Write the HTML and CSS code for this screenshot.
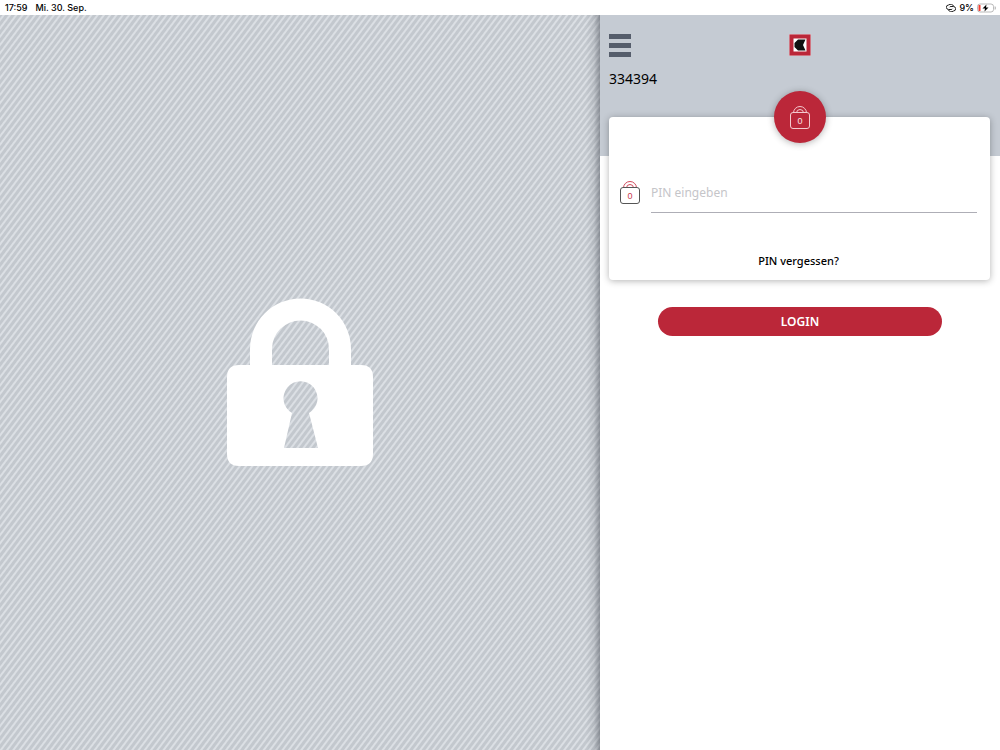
FILE: index.html
```html
<!DOCTYPE html>
<html lang="de">
<head>
    <meta charset="UTF-8">
    <meta name="viewport" content="width=device-width, initial-scale=1.0">
    <title>Login</title>
    <link rel="stylesheet" href="styles.css">
</head>
<body>
    <div class="statusbar">
        <span>17:59</span>
        <span>Mi. 30. Sep.</span>
        <div class="status-right">
            <svg width="10" height="8" viewBox="0 0 20 16" fill="none" stroke="#222" stroke-width="2">
                <path d="M13 9.500a3 3 0 0 1-3 1.500H5.500a4.500 4.500 0 0 1-.5-9C9-1 14 1 15 4"/>
                <path d="M7 6.500A3 3 0 0 1 10 5h4.500a4.500 4.500 0 0 1 .5 9c-4 3-9 1-10-2"/>
            </svg>
            <span>9%</span>
            <svg width="19" height="10" viewBox="0 0 19 10">
                <rect x=".5" y="1" width="16" height="8" rx="2.500" fill="#fff" stroke="#aaa" stroke-width=".8"/>
                <path d="M18 3.500v3q1-1.500 0-3" fill="#aaa" stroke="#aaa" stroke-width=".5"/>
                <rect x="1.500" y="2" width="2" height="6" rx=".5" fill="#f33b30"/>
                <path d="M9.500 1.500L5.500 5.500h2.500L7.500 8.500l4-4H9z" fill="#000"/>
            </svg>
        </div>
    </div>
    <div class="container">
        <div class="stage">
            <svg class="big-lock" viewBox="0 0 146 168" fill="#fff">
                <path fill-rule="evenodd" d="M23 67V51a50.500 50.500 0 0 1 101 0v16h10q12 0 12 12v77q0 12-12 12H12Q0 168 0 156V79Q0 67 12 67zM45 67h57V51a28.500 28.500 0 0 0-57 0zM65 115L57 150h34l-9-35a17 17 0 1 0-17 0z"/>
            </svg>
        </div>
        <main class="panel">
            <header class="header">
                <div class="header-top">
                    <button type="button" class="menu" aria-label="Menü"><span></span><span></span><span></span></button>
                    <svg class="logo" width="22" height="22" viewBox="0 0 22 22">
                        <rect width="22" height="22" fill="#e4c6cd"/>
                        <rect x=".5" y=".5" width="21" height="21" fill="#bb2739"/>
                        <rect x="4.500" y="4.500" width="13" height="13" fill="#fff"/>
                        <path d="M9 5.500h7.500l-2.500 5.500 2.500 5.500H9L5.500 13V9z" fill="#111"/>
                    </svg>
                </div>
                <div class="account">334394</div>
            </header>
            <form id="loginForm">
                <div class="card">
                    <div class="badge">
                        <svg class="pin-icon" width="20" height="23" viewBox="0 0 20 23" fill="none" stroke="#f3c9ce">
                            <path d="M3.500 7a6.500 6.500 0 0 1 13 0M6.500 7a3.500 3.500 0 0 1 7 0"/>
                            <rect x=".5" y="6.500" width="19" height="16" rx="2.500"/>
                            <text x="10" y="18" fill="#f9e3e6" stroke="none">0</text>
                        </svg>
                    </div>
                    <div class="pin-row">
                        <svg class="pin-icon" width="20" height="23" viewBox="0 0 20 23" fill="none" stroke="#d0485a">
                            <path d="M3.500 7a6.500 6.500 0 0 1 13 0M6.500 7a3.500 3.500 0 0 1 7 0"/>
                            <rect x=".5" y="6.500" width="19" height="16" rx="2.500" stroke="#555"/>
                            <text x="10" y="18" fill="#c83a4d" stroke="none">0</text>
                        </svg>
                        <input type="password" id="pin" name="pin" placeholder="PIN eingeben" aria-label="PIN">
                    </div>
                    <a href="#" class="forgot">PIN vergessen?</a>
                </div>
                <button type="submit" class="login">LOGIN</button>
            </form>
        </main>
    </div>
</body>
</html>
```
FILE: styles.css
```css
* {
    box-sizing: border-box;
}
body {
    margin: 0;
    min-height: 100vh;
    display: flex;
    flex-direction: column;
    font-family: "Noto Sans", sans-serif;
    background-color: #fff;
    color: #000;
}
.statusbar {
    display: flex;
    align-items: center;
    gap: 8px;
    height: 15px;
    padding: 0 4px 0 5px;
    font-family: Inter, sans-serif;
    font-size: 9px;
    font-weight: 500;
}
.status-right {
    display: flex;
    align-items: center;
    gap: 3px;
    margin-left: auto;
}
.container {
    flex: 1;
    display: grid;
    grid-template-columns: 3fr 2fr;
}
.stage {
    display: flex;
    align-items: center;
    justify-content: center;
    background: linear-gradient(to left, rgba(60,65,75,0.45), rgba(60,65,75,0.12) 6px, transparent 14px) no-repeat,
        repeating-linear-gradient(-53deg, #c3c8ce 0, #c3c8ce 2px, #dbdfe4 3px, #dbdfe4 4px, #c3c8ce 5px);
}
.big-lock {
    width: 146px;
    margin-bottom: 1px;
}
.header {
    height: 141px;
    padding: 19px 9px;
    background-color: #c5cbd3;
}
.header-top {
    display: grid;
    grid-template-columns: 1fr auto 1fr;
    align-items: start;
}
.menu {
    display: flex;
    flex-direction: column;
    gap: 4px;
    width: 22px;
    padding: 0;
    border: none;
    background: none;
    cursor: pointer;
}
.menu span {
    height: 5px;
    background-color: #555d6b;
}
.account {
    margin-top: 12px;
    font-size: 14px;
    line-height: 20px;
}
.card {
    position: relative;
    display: flex;
    flex-direction: column;
    align-items: center;
    height: 163px;
    margin: -39px 10px 27px 9px;
    padding: 55px 13px 9px 11px;
    border-radius: 4px;
    background-color: #fff;
    box-shadow: 0 1px 7px rgba(0,0,0,0.3);
}
.badge {
    position: absolute;
    top: -26px;
    left: calc(50% - 26px);
    display: flex;
    align-items: center;
    justify-content: center;
    width: 52px;
    height: 52px;
    border-radius: 50%;
    background-color: #bb2739;
    box-shadow: 0 1px 7px rgba(0,0,0,0.3);
}
.pin-icon text {
    font-family: "Liberation Sans", sans-serif;
    font-size: 9px;
    text-anchor: middle;
}
.pin-row {
    display: flex;
    align-items: center;
    gap: 11px;
    width: 100%;
}
input {
    flex: 1;
    height: 41px;
    padding: 0;
    border: none;
    border-bottom: 1px solid #aeaeb6;
    font-family: inherit;
    font-size: 12px;
    outline: none;
}
input::placeholder {
    color: #c5c5c9;
    opacity: 1;
}
.forgot {
    margin-top: auto;
    color: #000;
    font-size: 11px;
    font-weight: 500;
    line-height: 20px;
    text-decoration: none;
}
.login {
    display: block;
    width: 71%;
    height: 29px;
    margin: 0 auto;
    border: none;
    border-radius: 15px;
    background-color: #bb2739;
    color: #fff;
    font-family: inherit;
    font-size: 12px;
    font-weight: 600;
    cursor: pointer;
}
```
